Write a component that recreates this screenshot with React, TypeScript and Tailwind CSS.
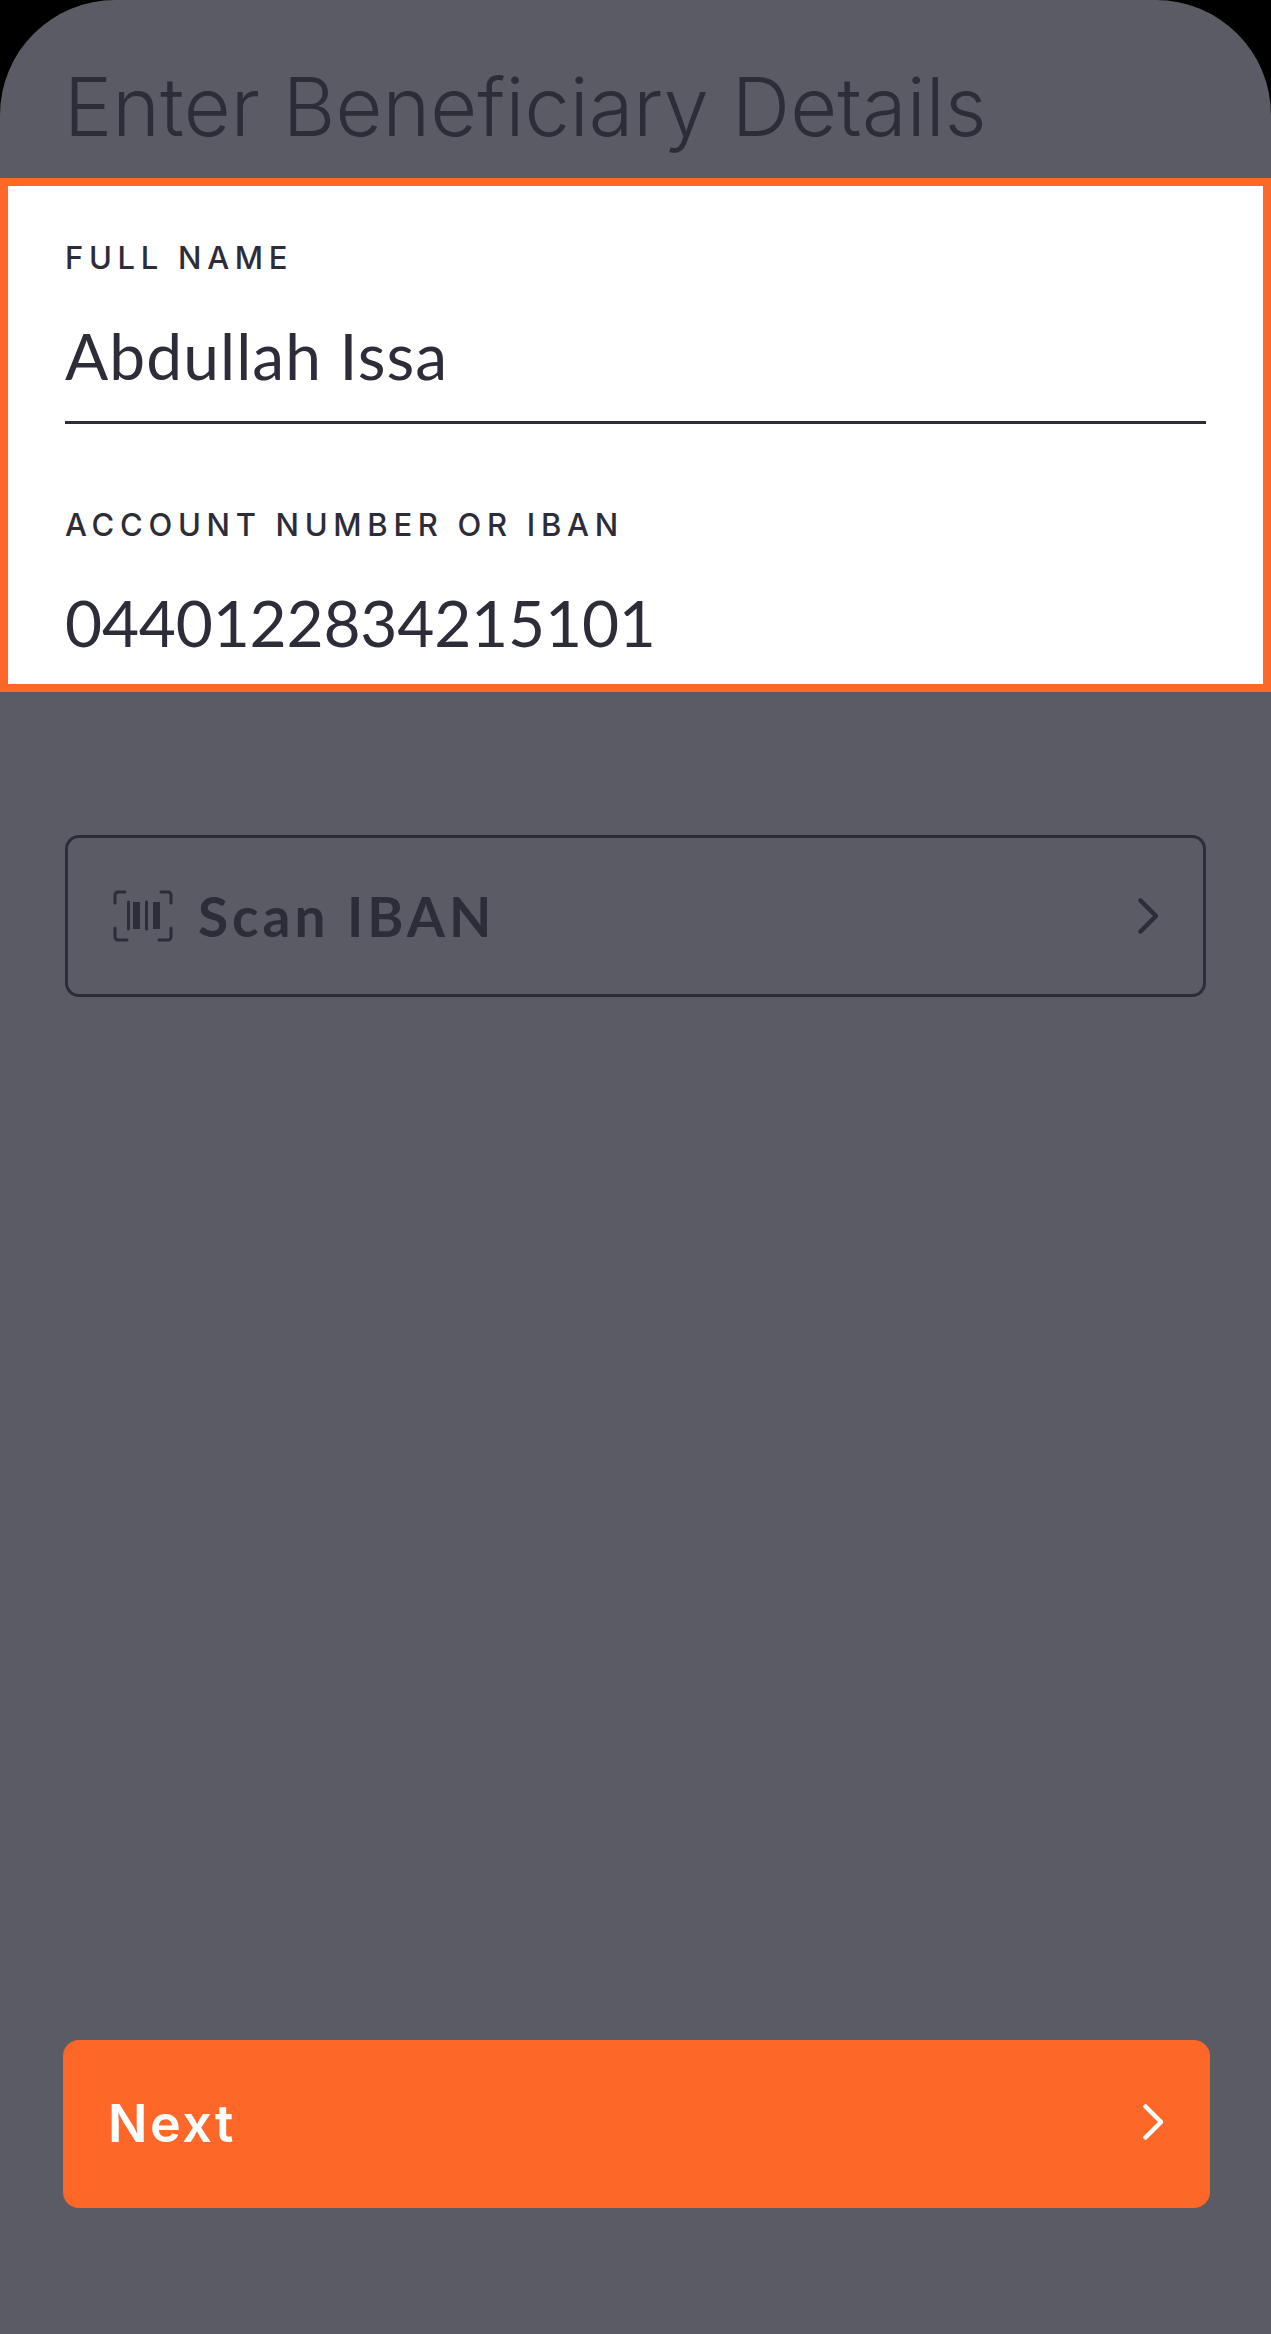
function Chevron({ className }: { className: string }) {
  return (
    <svg className={className} fill="none" viewBox="0 0 20 36" stroke="currentColor" strokeWidth="4.5" strokeLinecap="round" strokeLinejoin="round">
      <path d="M2.5 2.5L18 18 2.5 33.5" />
    </svg>
  );
}

function BarcodeIcon() {
  return (
    <svg className="w-[60px] h-[52px] shrink-0" fill="none" viewBox="0 0 60 52" stroke="currentColor" strokeWidth="3" strokeLinecap="round" strokeLinejoin="round">
      <path d="M12 2H5a3 3 0 00-3 3v8" />
      <path d="M48 2h7a3 3 0 013 3v8" />
      <path d="M2 38v9a3 3 0 003 3h9" />
      <path d="M58 38v9a3 3 0 01-3 3h-9" />
      <path d="M15.5 12v27M33.5 12v27" />
      <path d="M23.5 12v27M43.5 12v27" strokeWidth="7" strokeLinecap="butt" />
    </svg>
  );
}

function Field({ label, value, valueClass }: { label: string; value: string; valueClass: string }) {
  return (
    <div className="flex flex-col">
      <span className="font-['Inter',sans-serif] font-medium text-[31px] leading-[32px] tracking-[5.7px] text-[#2d2d3a]">{label}</span>
      <span className={`font-['Lato',sans-serif] text-[64px] leading-[70px] mt-[47px] text-[#2d2d3a] ${valueClass}`}>{value}</span>
    </div>
  );
}

export default function App() {
  return (
    <div className="w-[1271px] h-[2334px] bg-black overflow-hidden">
      <div className="h-full bg-[#5b5b66] rounded-t-[115px] flex flex-col">
        <header className="h-[178px] shrink-0 pl-[64px] pt-[57px]">
          <h1 className="font-['Inter',sans-serif] font-light text-[81px] leading-[100px] tracking-[0.1px] text-[#2d2d3a] whitespace-nowrap">Enter Beneficiary Details</h1>
        </header>

        <section className="h-[514px] shrink-0 border-[8px] border-[#fd6728] bg-white pl-[57px] pr-[57px] pt-[56px]">
          <Field label="FULL NAME" value="Abdullah Issa" valueClass="tracking-[1.1px]" />
          <div className="h-[3px] bg-[#2d2d3a] mt-[30px] mb-[85px]" />
          <Field label="ACCOUNT NUMBER OR IBAN" value="0440122834215101" valueClass="tracking-[-0.2px]" />
        </section>

        <button className="mt-[143px] mx-[65px] h-[162px] shrink-0 border-[3px] border-[#2d2d3a] rounded-[14px] pl-[45px] pr-[45px] flex items-center text-[#2d2d3a]">
          <BarcodeIcon />
          <span className="ml-[25px] font-['Lato',sans-serif] font-bold text-[55px] leading-none tracking-[4px]">Scan IBAN</span>
          <Chevron className="ml-auto w-[20px] h-[36px]" />
        </button>

        <button className="mt-auto mb-[126px] ml-[63px] w-[1147px] h-[168px] shrink-0 bg-[#fd6728] rounded-[16px] pl-[45px] pr-[47px] flex items-center text-white">
          <span className="font-['Inter',sans-serif] font-semibold text-[52px] leading-none tracking-[2.5px]">Next</span>
          <Chevron className="ml-auto mb-[5px] w-[20px] h-[36px]" />
        </button>
      </div>
    </div>
  );
}
